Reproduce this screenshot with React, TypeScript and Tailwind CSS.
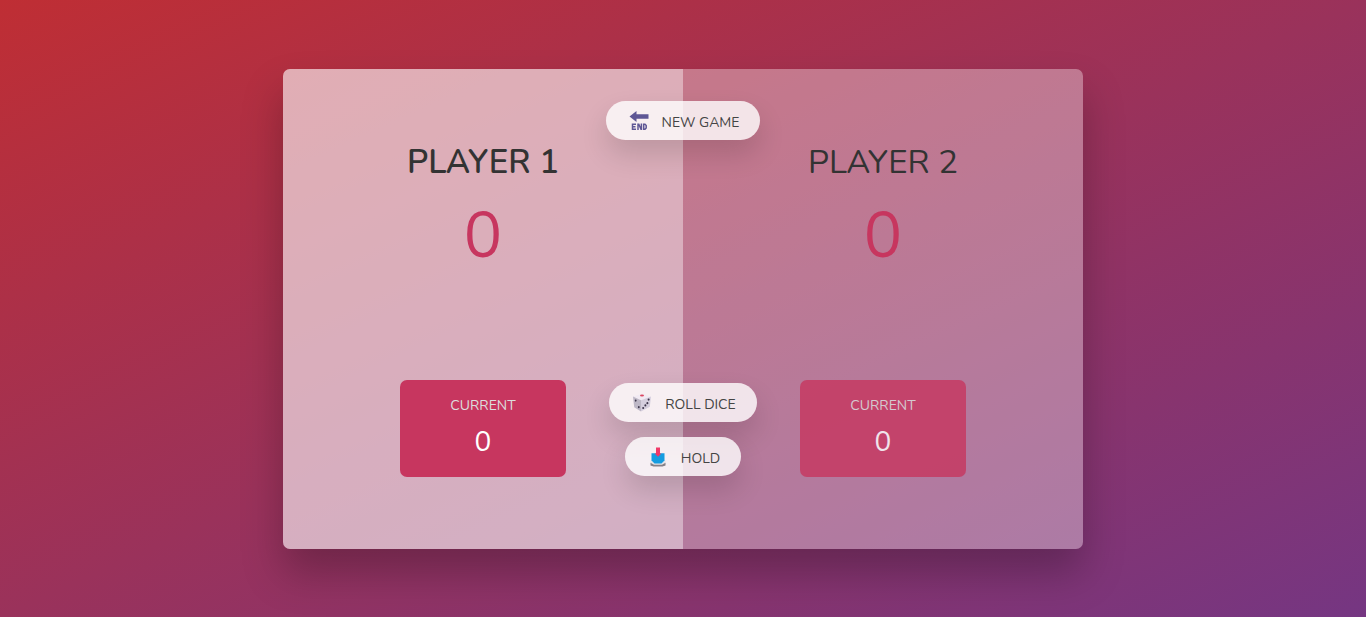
import { useState, type ReactNode } from 'react';

function EndIcon() {
  return (
    <svg viewBox="0 0 20 20" className="h-5 w-5" aria-hidden="true">
      <path d="M0.5 5.5 7.5 0V3.2H19.5V7.8H7.5V11Z" fill="#5f5795" />
      <g fill="none" stroke="#5f5795" strokeWidth="1.5">
        <path d="M7 13.3H3.5V18.2H7M3.5 15.7H6.5" />
        <path d="M9 18.9V13.3H9.8L12 18.2H12.4V12.6" />
        <path d="M14.7 13.3H16L17.2 14.5V17L16 18.2H14.7Z" />
      </g>
    </svg>
  );
}

function DiceIcon() {
  return (
    <svg viewBox="0 0 20 20" className="h-5 w-5" aria-hidden="true">
      <path d="M1 3.6 10 0.8 19 3.6 9 7.2Z" fill="#f1eaf3" />
      <path d="M1 3.6 9 7.2V18.5L2.2 14.2Z" fill="#bdb7c6" />
      <path d="M9 7.2 19 3.6 17.8 13.8 9 18.5Z" fill="#d5cede" />
      <ellipse cx="10" cy="2.4" rx="2" ry="1" fill="#dc4862" />
      <g fill="#3c354a">
        <ellipse cx="3.7" cy="7.6" rx="0.9" ry="1.1" />
        <ellipse cx="6.8" cy="14.2" rx="0.9" ry="1.1" />
        <ellipse cx="16.6" cy="6.6" rx="1" ry="1.1" />
        <ellipse cx="15.4" cy="10.2" rx="1" ry="1.1" />
        <ellipse cx="13.4" cy="12.4" rx="1" ry="1.1" />
        <ellipse cx="11.2" cy="15" rx="1" ry="1.1" />
      </g>
    </svg>
  );
}

function HoldIcon() {
  return (
    <svg viewBox="0 0 20 20" className="h-5 w-5" aria-hidden="true">
      <path d="M2.5 13.5 5.5 15.5H14.5L17.5 13.5V18.5H2.5Z" fill="#e5e2e6" />
      <path d="M2.5 15.8 6 17.8H14L17.5 15.8V18.6L14.5 19.4H5.5L2.5 18.6Z" fill="#858087" />
      <path d="M3.5 6.3H16.5V13.5L13.5 16.5H6.5L3.5 13.5Z" fill="#159ce0" />
      <path d="M8 0.5H12V6.5H13.4L10 9.8 6.6 6.5H8Z" fill="#f03868" />
    </svg>
  );
}

type PlayerProps = { name: string; score: number; current: number; active: boolean };

function Player({ name, score, current, active }: PlayerProps) {
  return (
    <section className={`flex flex-1 flex-col items-center p-[72px] ${active ? 'bg-white/40' : ''}`}>
      <h2 className={`text-[33px] leading-[43px] whitespace-nowrap uppercase text-[#333] ${active ? 'font-semibold' : 'font-normal'}`}>
        {name}
      </h2>
      <p className="mt-[9px] text-[64px] leading-[86px] text-[#c7365f]">{score}</p>
      <div className={`mt-auto w-[65%] rounded-[7px] bg-[#c7365f] p-4 text-center text-white ${active ? '' : 'opacity-80'}`}>
        <p className="text-sm leading-5 text-[#ddd] uppercase">Current</p>
        <p className="mt-2 text-[28px] leading-[37px]">{current}</p>
      </div>
    </section>
  );
}

function ActionButton({ icon, children, onClick }: { icon: ReactNode; children: ReactNode; onClick?: () => void }) {
  return (
    <button
      type="button"
      onClick={onClick}
      className="pointer-events-auto flex h-[39px] cursor-pointer items-center gap-[13px] rounded-full bg-white/80 pr-[21px] pl-[23px] text-sm leading-5 whitespace-nowrap text-[#444] uppercase shadow-[0_14px_28px_rgba(0,0,0,0.14)]"
    >
      {icon}
      <span className="pt-1">{children}</span>
    </button>
  );
}

export default function App() {
  const [active, setActive] = useState(0);

  return (
    <div className="flex min-h-screen items-center justify-center bg-linear-to-tl/srgb from-[#753682] to-[#bf2e34] font-['Nunito','Lato',sans-serif]">
      <main className="relative mt-px flex min-h-[480px] w-full max-w-[800px] rounded-[7px] bg-white/35 shadow-[0_24px_40px_rgba(0,0,0,0.25)]">
        <div className="flex w-full overflow-hidden rounded-[7px]">
          <Player name="Player 1" score={0} current={0} active={active === 0} />
          <Player name="Player 2" score={0} current={0} active={active === 1} />
        </div>
        <div className="pointer-events-none absolute inset-0 flex flex-col items-center pt-8 pb-[73px]">
          <ActionButton icon={<EndIcon />} onClick={() => setActive(0)}>New game</ActionButton>
          <div className="mt-auto flex flex-col items-center gap-[15px]">
            <ActionButton icon={<DiceIcon />}>Roll dice</ActionButton>
            <ActionButton icon={<HoldIcon />} onClick={() => setActive(1 - active)}>Hold</ActionButton>
          </div>
        </div>
      </main>
    </div>
  );
}
